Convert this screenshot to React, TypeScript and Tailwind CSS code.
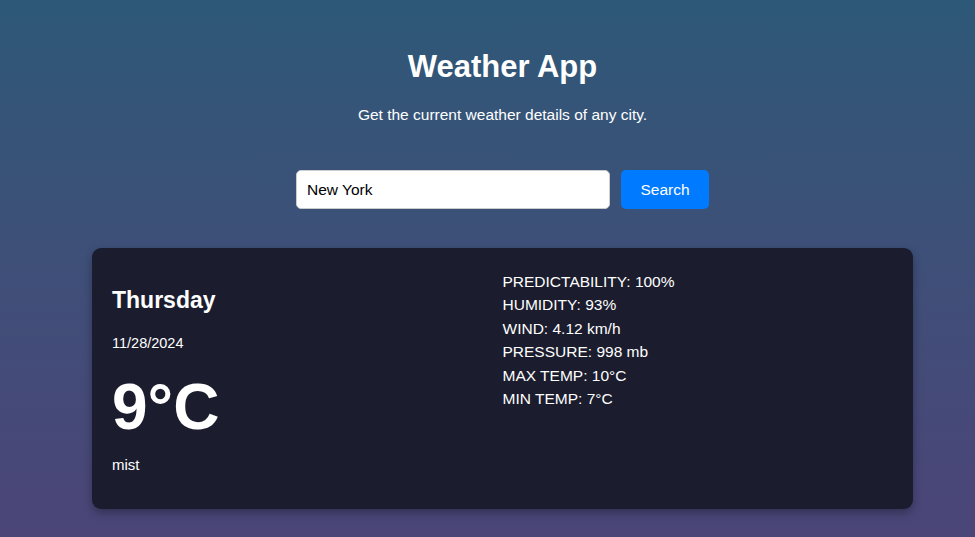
import React from "react";

const details = [
  { label: "PREDICTABILITY", value: "100%" },
  { label: "HUMIDITY", value: "93%" },
  { label: "WIND", value: "4.12 km/h" },
  { label: "PRESSURE", value: "998 mb" },
  { label: "MAX TEMP", value: "10°C" },
  { label: "MIN TEMP", value: "7°C" },
];

const App = () => {
  return (
    <div
      className="min-h-[537px] w-full bg-gradient-to-b from-[#2d5878] to-[#4b4578] text-white"
      style={{ fontFamily: '"Liberation Sans", Arial, sans-serif' }}
    >
      <div className="flex flex-col items-center pl-[30px] pt-[48px]">
        {/* header */}
        <h1 className="text-[31px] font-bold leading-[38px]">Weather App</h1>
        <p className="mt-[20px] text-[15.5px] leading-[18px]">
          Get the current weather details of any city.
        </p>

        {/* search */}
        <div className="mt-[46px] flex gap-[11px]">
          <input
            defaultValue="New York"
            className="h-[39px] w-[314px] rounded-[5px] border border-[#ccc] bg-white px-[10px] text-[15.5px] text-black outline-none"
          />
          <button className="h-[39px] w-[88px] rounded-[5px] bg-[#007bff] text-[15.5px] text-white">
            Search
          </button>
        </div>

        {/* card */}
        <div className="mt-[39px] flex h-[261px] w-[821px] rounded-[9px] bg-[#1b1d2e] p-[20px] shadow-[0_4px_10px_rgba(0,0,0,0.3)]">
          <div className="flex flex-1 flex-col pt-[18px]">
            <h2 className="text-[23px] font-bold leading-[28px]">Thursday</h2>
            <p className="mt-[20px] text-[14.5px] leading-[18px]">11/28/2024</p>
            <p className="mt-[18px] text-[64px] font-bold leading-[74px]">9°C</p>
            <p className="mt-[12px] text-[15px] leading-[18px]">mist</p>
          </div>
          <div className="flex flex-1 flex-col pt-[2px]">
            {details.map((d) => (
              <p key={d.label} className="text-[15.5px] leading-[23.4px]">
                {d.label}: {d.value}
              </p>
            ))}
          </div>
        </div>
      </div>
    </div>
  );
};

export default App;
